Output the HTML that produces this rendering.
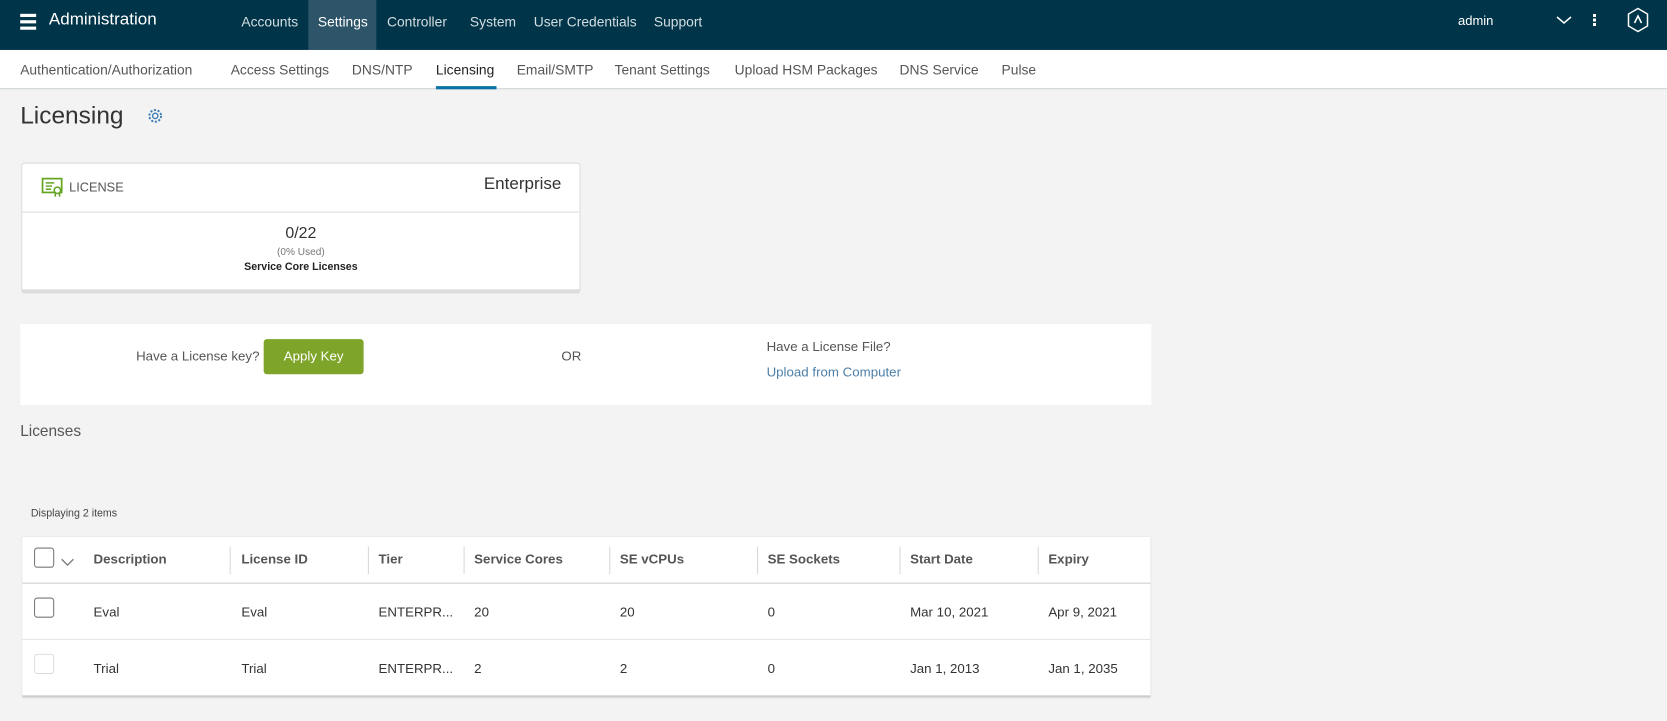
<!DOCTYPE html>
<html><head><style>
*{box-sizing:border-box;margin:0;padding:0}
body{width:1667px;height:721px;background:#f3f3f3;font-family:"Liberation Sans",sans-serif;color:#333;position:relative;overflow:hidden}
#w{position:absolute;left:0;top:0;width:1568px;height:678px;transform:scale(1.0632);transform-origin:0 0}
.a{position:absolute;white-space:nowrap}
.hdr{position:absolute;left:0;top:0;width:1568px;height:47px;background:#003549}
.hdr .a{color:#d4dde2;font-size:13px;top:13px}
.sub{position:absolute;left:0;top:47px;width:1568px;height:37px;background:#fff;border-bottom:1px solid #c8d0d4}
.sub .a{font-size:13px;color:#555;top:11px}
.th{font-weight:bold;color:#555;font-size:12.5px;top:519px}
.sep{position:absolute;width:1px;height:26px;background:#d8d8d8;top:514px}
.cb{position:absolute;width:19px;height:19px;border:1px solid #777;border-radius:3px;background:#fff}
.td{font-size:12.5px;color:#333}
</style></head><body>
<div id="w">
<div class="hdr">
 <div class="a" style="left:19px;top:13px;width:15px;height:14px">
  <div style="height:2.5px;background:#fff;margin-bottom:3.5px"></div><div style="height:2.5px;background:#fff;margin-bottom:3.5px"></div><div style="height:2.5px;background:#fff"></div></div>
 <div class="a" style="left:46px;top:10px;font-size:16px;color:#fff">Administration</div>
 <div class="a" style="left:227px">Accounts</div>
 <div style="position:absolute;left:290px;top:0;width:64px;height:47px;background:#2d5469"></div>
 <div class="a" style="left:299px;color:#fff">Settings</div>
 <div class="a" style="left:364px">Controller</div>
 <div class="a" style="left:442px">System</div>
 <div class="a" style="left:502px">User Credentials</div>
 <div class="a" style="left:615px">Support</div>
</div>
<div class="sub">
 <div class="a" style="left:19px">Authentication/Authorization</div>
 <div class="a" style="left:217px">Access Settings</div>
 <div class="a" style="left:331px">DNS/NTP</div>
 <div class="a" style="left:410px;color:#222">Licensing</div>
 <div style="position:absolute;left:410px;top:34px;width:57px;height:3px;background:#0a73a6"></div>
 <div class="a" style="left:486px">Email/SMTP</div>
 <div class="a" style="left:578px">Tenant Settings</div>
 <div class="a" style="left:691px">Upload HSM Packages</div>
 <div class="a" style="left:846px">DNS Service</div>
 <div class="a" style="left:942px">Pulse</div>
</div>
<div class="a" style="left:19px;top:95px;font-size:23px;color:#333">Licensing</div>
<svg class="a" style="left:138px;top:101px" width="16" height="16"><circle cx="8" cy="8" r="2.5" stroke="#3b7bb5" stroke-width="1.3" fill="none"/><circle cx="8" cy="8" r="5.5" stroke="#3b7bb5" stroke-width="1.8" stroke-dasharray="2 1.5" fill="none"/></svg>

<div style="position:absolute;left:20px;top:153px;width:526px;height:123px;background:#fff;border:1px solid #ddd;border-bottom:4px solid #ddd;border-radius:3px"></div>
<div style="position:absolute;left:21px;top:199px;width:524px;height:1px;background:#ddd"></div>
<svg class="a" style="left:39px;top:167px" width="21" height="18"><rect x="1" y="1" width="18" height="13" stroke="#62a420" stroke-width="1.6" fill="none"/><path d="M4 5h8M4 8h6M4 11h5" stroke="#62a420" stroke-width="1.4"/><circle cx="15" cy="12" r="3" stroke="#62a420" stroke-width="1.5" fill="#fff"/><path d="M13 15v3M17 15v3" stroke="#62a420" stroke-width="1.5"/></svg>
<div class="a" style="left:65px;top:169px;font-size:12px;color:#555">LICENSE</div>
<div class="a" style="left:328px;width:200px;text-align:right;top:165px;font-size:16px;color:#333">Enterprise</div>
<div class="a" style="left:21px;width:524px;text-align:center;top:211px;font-size:15px;color:#333">0/22</div>
<div class="a" style="left:21px;width:524px;text-align:center;top:232px;font-size:9.5px;color:#777">(0% Used)</div>
<div class="a" style="left:21px;width:524px;text-align:center;top:246px;font-size:10px;font-weight:bold;color:#222">Service Core Licenses</div>

<div style="position:absolute;left:19px;top:305px;width:1064px;height:76px;background:#fff"></div>
<div class="a" style="left:128px;top:328px;font-size:12.5px;color:#555">Have a License key?</div>
<div class="a" style="left:248px;top:319px;width:94px;height:33px;background:#7ea42a;border-radius:3px;color:#fff;font-size:12.5px;text-align:center;line-height:33px">Apply Key</div>
<div class="a" style="left:528px;top:328px;font-size:12.5px;color:#555">OR</div>
<div class="a" style="left:721px;top:319px;font-size:12.5px;color:#555">Have a License File?</div>
<div class="a" style="left:721px;top:343px;font-size:12.5px;color:#4c7fa8">Upload from Computer</div>

<div class="a" style="left:19px;top:398px;font-size:14.5px;color:#555">Licenses</div>
<div class="a" style="left:29px;top:478px;font-size:10px;color:#444">Displaying 2 items</div>

<div style="position:absolute;left:21px;top:505px;width:1061px;height:151px;background:#fff;border-bottom:2px solid #ccc;box-shadow:0 0 2px #ccc"></div>
<div style="position:absolute;left:21px;top:548px;width:1061px;height:1px;background:#ccc"></div>
<div style="position:absolute;left:21px;top:601px;width:1061px;height:1px;background:#e6e6e6"></div>
<div class="cb" style="left:32px;top:515px"></div>
<svg class="a" style="left:57px;top:525px" width="13" height="8"><path d="M1 1l5.5 5.5L12 1" stroke="#777" stroke-width="1.2" fill="none"/></svg>
<div class="a th" style="left:88px">Description</div>
<div class="sep" style="left:216px"></div><div class="a th" style="left:227px">License ID</div>
<div class="sep" style="left:346px"></div><div class="a th" style="left:356px">Tier</div>
<div class="sep" style="left:436px"></div><div class="a th" style="left:446px">Service Cores</div>
<div class="sep" style="left:573px"></div><div class="a th" style="left:583px">SE vCPUs</div>
<div class="sep" style="left:712px"></div><div class="a th" style="left:722px">SE Sockets</div>
<div class="sep" style="left:846px"></div><div class="a th" style="left:856px">Start Date</div>
<div class="sep" style="left:976px"></div><div class="a th" style="left:986px">Expiry</div>

<div class="cb" style="left:32px;top:562px"></div>
<div class="a td" style="left:88px;top:569px">Eval</div>
<div class="a td" style="left:227px;top:569px">Eval</div>
<div class="a td" style="left:356px;top:569px">ENTERPR...</div>
<div class="a td" style="left:446px;top:569px">20</div>
<div class="a td" style="left:583px;top:569px">20</div>
<div class="a td" style="left:722px;top:569px">0</div>
<div class="a td" style="left:856px;top:569px">Mar 10, 2021</div>
<div class="a td" style="left:986px;top:569px">Apr 9, 2021</div>

<div class="cb" style="left:32px;top:615px;border-color:#ddd"></div>
<div class="a td" style="left:88px;top:622px">Trial</div>
<div class="a td" style="left:227px;top:622px">Trial</div>
<div class="a td" style="left:356px;top:622px">ENTERPR...</div>
<div class="a td" style="left:446px;top:622px">2</div>
<div class="a td" style="left:583px;top:622px">2</div>
<div class="a td" style="left:722px;top:622px">0</div>
<div class="a td" style="left:856px;top:622px">Jan 1, 2013</div>
<div class="a td" style="left:986px;top:622px">Jan 1, 2035</div>
</div>
<div class="a" style="left:1458px;top:13px;color:#fff;font-size:13px">admin</div>
<svg class="a" style="left:1556px;top:15px" width="16" height="10"><path d="M1 2l7 6 7-6" stroke="#fff" stroke-width="1.5" fill="none"/></svg>
<div class="a" style="left:1593px;top:14px;width:3px;height:12px;background:linear-gradient(#fff 0 3px,transparent 3px 4.5px,#fff 4.5px 7.5px,transparent 7.5px 9px,#fff 9px)"></div>
<svg class="a" style="left:1626px;top:7px" width="24" height="26"><path d="M12 1.5L21.5 7v12L12 24.5 2.5 19V7z" stroke="#fff" stroke-width="1.5" fill="none"/><path d="M8.5 16L12 9l3.5 7" stroke="#fff" stroke-width="1.6" fill="none"/></svg>
</body></html>
